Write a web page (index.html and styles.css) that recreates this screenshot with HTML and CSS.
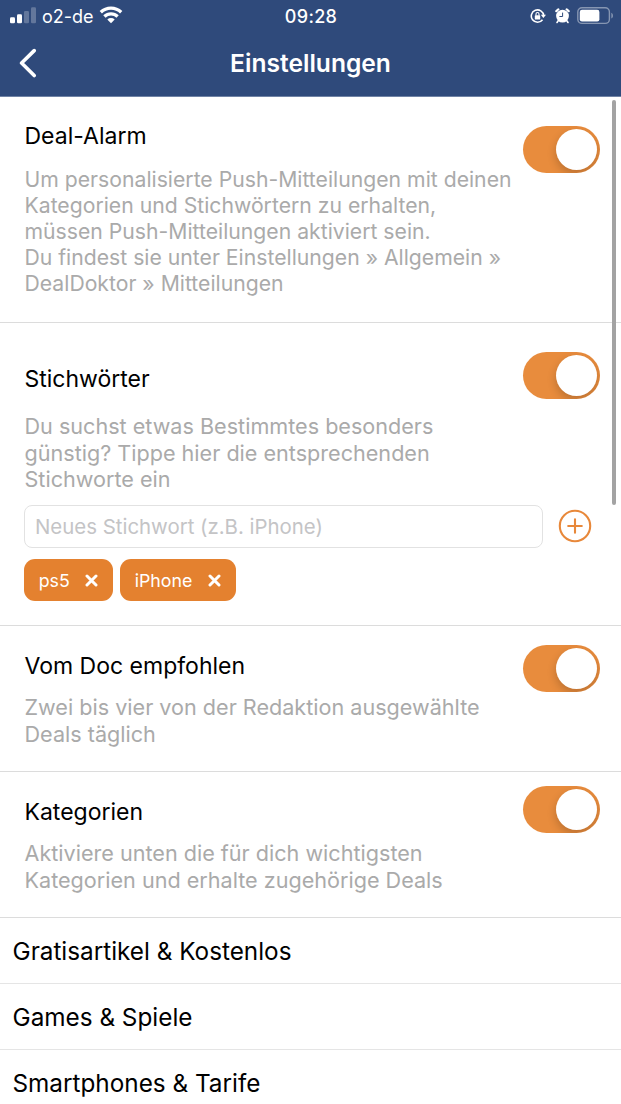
FILE: index.html
```html
<!DOCTYPE html>
<html lang="de">
<head>
    <meta charset="UTF-8">
    <meta name="viewport" content="width=device-width, initial-scale=1.0">
    <title>Einstellungen</title>
    <link rel="stylesheet" href="styles.css">
</head>
<body>
    <header class="header">
        <div class="status">
            <div class="carrier">
                <svg class="signal" width="26" height="17" viewBox="0 0 26 17" fill="#fff">
                    <rect x="0" y="10.3" width="5" height="6" rx="1.3"/>
                    <rect x="7" y="7.2" width="5" height="9.1" rx="1.3"/>
                    <rect x="14" y="4" width="5" height="12.3" rx="1.3" opacity=".25"/>
                    <rect x="21" y="0.2" width="5" height="16.1" rx="1.3" opacity=".25"/>
                </svg>
                <span>o2-de</span>
                <svg class="wifi" width="24" height="18" viewBox="0 0 24 18" fill="none" stroke="#fff" stroke-width="3.3">
                    <path d="M1.8 6.2a14.6 14.6 0 0 1 20.4 0"/>
                    <path d="M5.4 10.5a9.5 9.5 0 0 1 13.2 0"/>
                    <path d="M12 17.2l-3.7-3.8a5.4 5.4 0 0 1 7.4 0z" fill="#fff" stroke="none"/>
                </svg>
            </div>
            <div class="time">09:28</div>
            <div class="indicators">
                <svg class="lock" width="17" height="16" viewBox="0 0 17 16" fill="none" stroke="#fff">
                    <path d="M13.7 7.6a6.2 6.2 0 1 0-1.2 4.2" stroke-width="1.6"/>
                    <path d="M10.8 6.8h5.2l-2.6 3.3z" fill="#fff" stroke="none"/>
                    <rect x="4.8" y="7.3" width="5.4" height="4.2" rx=".6" fill="#fff" stroke="none"/>
                    <path d="M6 7.5V6a1.5 1.5 0 0 1 3 0v1.5" stroke-width="1.1"/>
                </svg>
                <svg class="alarm" width="15" height="16" viewBox="0 0 15 16">
                    <g fill="none" stroke="#fff" stroke-linecap="round">
                        <path d="M1.3 3.2a8 8 0 0 1 2-1.8M13.7 3.2a8 8 0 0 0-2-1.8" stroke-width="2.2"/>
                        <path d="M3.2 12.8l-1.2 1.7M11.8 12.8l1.2 1.7" stroke-width="1.6"/>
                    </g>
                    <circle cx="7.5" cy="8.1" r="6.4" fill="#fff"/>
                    <path d="M7.6 4.6v3.9H4.4" fill="none" stroke="#2f4a7b" stroke-width="1"/>
                </svg>
                <svg class="battery" width="37" height="18" viewBox="0 0 37 18">
                    <rect x=".8" y=".8" width="31.6" height="15.6" rx="4.2" fill="none" stroke="#fff" stroke-opacity=".42" stroke-width="1.4"/>
                    <rect x="2.8" y="2.8" width="19.6" height="11.6" rx="2.2" fill="#fff"/>
                    <path d="M34.4 5.8c2 .8 2 5 0 5.8z" fill="#fff" opacity=".45"/>
                </svg>
            </div>
        </div>
        <div class="navbar">
            <svg class="back" width="18" height="30" viewBox="0 0 18 30" fill="none" stroke="#fff" stroke-width="3.6" stroke-linecap="round" stroke-linejoin="round">
                <path d="M15.2 2.6L2.6 15l12.6 12.6"/>
            </svg>
            <h1>Einstellungen</h1>
        </div>
    </header>

    <main>
        <section class="setting alarm-setting">
            <div class="text">
                <h2>Deal-Alarm</h2>
                <p>Um personalisierte Push-Mitteilungen mit deinen<br>Kategorien und Stichwörtern zu erhalten,<br>müssen Push-Mitteilungen aktiviert sein.<br>Du findest sie unter Einstellungen » Allgemein »<br>DealDoktor » Mitteilungen</p>
            </div>
            <div class="switch"><div class="knob"></div></div>
        </section>

        <section class="setting keywords">
            <div class="text">
                <h2>Stichwörter</h2>
                <p>Du suchst etwas Bestimmtes besonders<br>günstig? Tippe hier die entsprechenden<br>Stichworte ein</p>
            </div>
            <div class="switch"><div class="knob"></div></div>
            <div class="keyword-form">
                <input type="text" placeholder="Neues Stichwort (z.B. iPhone)">
                <svg class="add" width="34" height="34" viewBox="0 0 34 34" fill="none" stroke="#e8883a" stroke-width="2.1">
                    <circle cx="17" cy="17" r="15.2"/>
                    <path d="M17 10.2v13.6M10.2 17h13.6" stroke-linecap="round"/>
                </svg>
            </div>
            <div class="tags">
                <span class="tag">ps5
                    <svg width="13" height="13" viewBox="0 0 13 13" stroke="#fff" stroke-width="3" stroke-linecap="round"><path d="M2 2l9 9M11 2l-9 9"/></svg>
                </span>
                <span class="tag">iPhone
                    <svg width="13" height="13" viewBox="0 0 13 13" stroke="#fff" stroke-width="3" stroke-linecap="round"><path d="M2 2l9 9M11 2l-9 9"/></svg>
                </span>
            </div>
        </section>

        <section class="setting doc">
            <div class="text">
                <h2>Vom Doc empfohlen</h2>
                <p>Zwei bis vier von der Redaktion ausgewählte<br>Deals täglich</p>
            </div>
            <div class="switch"><div class="knob"></div></div>
        </section>

        <section class="setting categories">
            <div class="text">
                <h2>Kategorien</h2>
                <p>Aktiviere unten die für dich wichtigsten<br>Kategorien und erhalte zugehörige Deals</p>
            </div>
            <div class="switch"><div class="knob"></div></div>
        </section>

        <ul class="category-list">
            <li>Gratisartikel &amp; Kostenlos</li>
            <li>Games &amp; Spiele</li>
            <li>Smartphones &amp; Tarife</li>
        </ul>
    </main>
    <div class="scrollbar"></div>
</body>
</html>
```

FILE: styles.css
```css
* {
    box-sizing: border-box;
}
body {
    margin: 0;
    height: 1104px;
    overflow: hidden;
    position: relative;
    background-color: #fff;
    color: #000;
    font-family: Inter, "Liberation Sans", sans-serif;
}
h1, h2, p, ul {
    margin: 0;
    padding: 0;
}
svg {
    display: block;
    flex: none;
}

/* header */
.header {
    height: 97px;
    background-color: #2f4a7b;
    border-bottom: 1px solid #7083a5;
    color: #fff;
}
.status {
    display: grid;
    grid-template-columns: 1fr auto 1fr;
    height: 32px;
    padding: 0 7px 0 10px;
    font-size: 18px;
    line-height: 33px;
}
.carrier {
    display: flex;
}
.signal {
    margin: 7px 6px 0 0;
}
.wifi {
    margin: 6px 0 0 5px;
}
.time {
    margin-right: 2px;
    font-weight: 500;
    letter-spacing: 0.3px;
}
.indicators {
    display: flex;
    justify-content: flex-end;
}
.lock {
    margin-top: 8px;
}
.alarm {
    margin: 8px 0 0 8px;
}
.battery {
    margin: 7px 0 0 7px;
}
.navbar {
    display: grid;
    grid-template-columns: 1fr auto 1fr;
    align-items: center;
    height: 62px;
    padding: 0 19px;
}
.navbar h1 {
    font-size: 24.6px;
    font-weight: 600;
    line-height: 30px;
}

/* settings */
.setting {
    display: grid;
    grid-template-columns: 1fr 77px;
    align-content: start;
    padding: 0 21px 0 24px;
    border-bottom: 1px solid #dcdcdc;
}
.text {
    padding-left: 0.5px;
    white-space: nowrap;
}
.setting h2 {
    font-size: 23px;
    font-weight: 400;
    line-height: 30px;
}
.setting p {
    color: #aaa;
    font-size: 21.6px;
    line-height: 26.6px;
}
.alarm-setting {
    height: 226px;
    padding-top: 24px;
}
.alarm-setting p {
    margin-top: 15px;
    font-size: 21.2px;
    line-height: 26px;
}
.alarm-setting .switch {
    margin-top: 5px;
}
.keywords {
    height: 303px;
    padding-top: 29px;
}
.keywords .text {
    padding-top: 12px;
}
.keywords p {
    margin-top: 19px;
}
.doc {
    height: 146px;
    padding-top: 19px;
}
.doc .text {
    padding-top: 6px;
}
.doc p {
    margin-top: 13px;
}
.categories {
    height: 146px;
    padding-top: 14px;
}
.categories .text {
    padding-top: 11px;
}
.categories p {
    margin-top: 13px;
}

.switch {
    width: 77px;
    height: 47px;
    padding: 3px;
    border-radius: 24px;
    background-color: #e88c3d;
    overflow: hidden;
}
.knob {
    width: 41px;
    height: 41px;
    margin-left: 30px;
    border-radius: 50%;
    background-color: #fff;
    box-shadow: 0 4px 10px rgba(0, 0, 0, 0.2);
}

.keyword-form {
    grid-column: 1 / 3;
    display: flex;
    align-items: center;
    gap: 15px;
    margin-top: 12px;
}
.keyword-form input {
    width: 519px;
    height: 43px;
    padding: 1px 10px 0;
    border: 1px solid #e2e2e2;
    border-radius: 8px;
    background-color: #fff;
    font-family: inherit;
    font-size: 20.4px;
}
.keyword-form input::placeholder {
    color: #c4c4c6;
    opacity: 1;
}
.tags {
    grid-column: 1 / 3;
    display: flex;
    gap: 7px;
    margin-top: 11.5px;
}
.tag {
    display: flex;
    align-items: center;
    gap: 15.5px;
    height: 42px;
    padding: 0 14.7px;
    border-radius: 11px;
    background-color: #e4812f;
    color: #fff;
    font-size: 17.8px;
}

.category-list {
    list-style: none;
}
.category-list li {
    height: 66px;
    padding-left: 12.5px;
    border-bottom: 1px solid #e5e5e5;
    font-size: 24.3px;
    line-height: 67px;
}

.scrollbar {
    position: absolute;
    top: 100px;
    right: 5px;
    width: 4px;
    height: 405px;
    border-radius: 2px;
    background-color: #a3a3a3;
}
```
